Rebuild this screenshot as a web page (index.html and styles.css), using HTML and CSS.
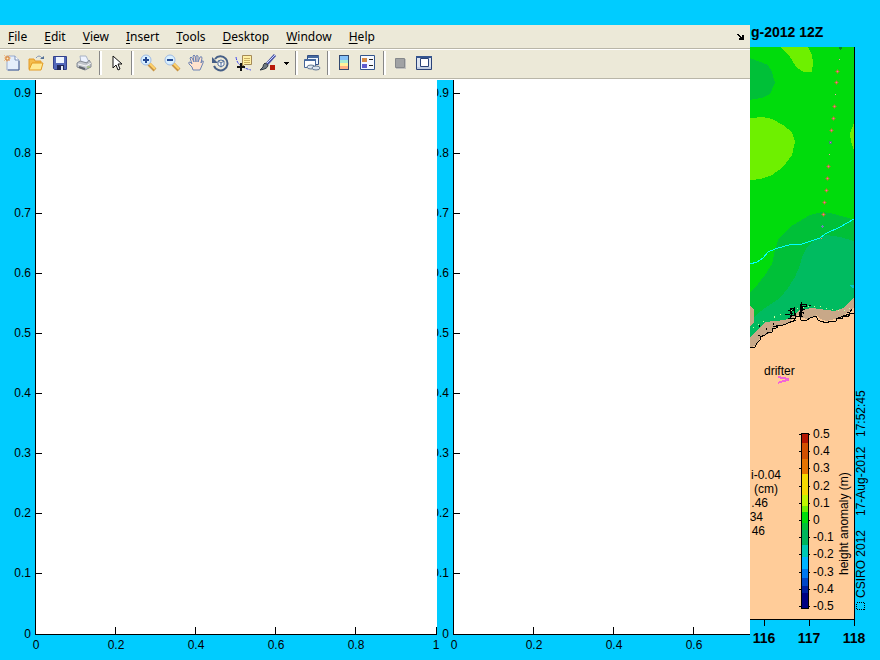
FILE: index.html
```html
<!DOCTYPE html>
<html lang="en">
<head>
<meta charset="utf-8">
<title>Figure</title>
<link rel="stylesheet" href="styles.css">
</head>
<body>
<main class="figure">
  <section class="window">
    <nav class="menubar" aria-label="Menu">
      <button class="menu"><u>F</u>ile</button>
      <button class="menu"><u>E</u>dit</button>
      <button class="menu"><u>V</u>iew</button>
      <button class="menu"><u>I</u>nsert</button>
      <button class="menu"><u>T</u>ools</button>
      <button class="menu"><u>D</u>esktop</button>
      <button class="menu"><u>W</u>indow</button>
      <button class="menu"><u>H</u>elp</button>
      <button class="dock" aria-label="Dock figure"><svg width="8" height="8" viewBox="0 0 8 8"><path d="M0 1h2v1h1v1h1v1h1V2h2v5H2V5h1V4H2V3H1V2H0z"/></svg></button>
    </nav>
    <div class="toolbar" role="toolbar" aria-label="Figure tools">
      <button class="tool" aria-label="New figure"><svg width="18" height="18" viewBox="0 0 18 18"><path d="M4 2h8l4 4v10H4z" fill="#e4eefb" stroke="#9aabcf"/><path d="M5 16h11V7" fill="none" stroke="#4c6496"/><path d="M12 2v4h4" fill="#fff" stroke="#7d91b8"/><path d="M4 1v7M1 4h7M1 1l6 6M7 1L1 7" stroke="#eebd88"/><path d="M3 3h3v3H3z" fill="#fff2c0" stroke="#d3752c"/></svg></button>
      <button class="tool" aria-label="Open"><svg width="18" height="18" viewBox="0 0 18 18"><path d="M2 15V5h5l1 2h6v8z" fill="#f5bd4c" stroke="#e29a2b"/><path d="M2 16l3-7h11l-2 7z" fill="#ffe993" stroke="#e39b22"/><path d="M9 4q3-4 6 0" fill="none" stroke="#8296b8"/><path d="M13 5h4V2z" fill="#536f96"/></svg></button>
      <button class="tool" aria-label="Save"><svg width="18" height="18" viewBox="0 0 18 18"><path d="M2.500 2.500h13v13h-12l-1-1z" fill="#5267b9" stroke="#34428c"/><path d="M5 3h8v6H5z" fill="#edf4ff"/><path d="M6 11h7v5H6z" fill="#202858"/><path d="M10 12h2v4h-2z" fill="#e8edf9"/></svg></button>
      <button class="tool" aria-label="Print"><svg width="18" height="18" viewBox="0 0 18 18"><path d="M6 9L5 2h6l3 6z" fill="#edf3ff" stroke="#a9b2c4"/><path d="M2 9l3-2 7 2 2-3 2 3v4l-6 3-8-3z" fill="#c2c6cc" stroke="#868c95"/><path d="M3 10l8 2 5-3" fill="none" stroke="#f7f7f7"/><path d="M4 13l6 2" stroke="#60656d" stroke-width="2"/><path d="M12 13h3" stroke="#95bd54"/></svg></button>
      <span class="sep"></span>
      <button class="tool" aria-label="Edit plot"><svg width="18" height="18" viewBox="0 0 18 18"><path d="M6 2v12l3-3 2 5 2-1-2-5h4z" fill="#fff" stroke="#111"/></svg></button>
      <span class="sep"></span>
      <button class="tool" aria-label="Zoom in"><svg width="18" height="18" viewBox="0 0 18 18"><path d="M10 10l6 6" stroke="#c99443" stroke-width="4"/><path d="M10 9l6 6" stroke="#ffd36b" stroke-width="2"/><circle cx="7" cy="6" r="5" fill="#d9f0ff" stroke="#9fbbe4"/><path d="M4 6h6M7 3v6" stroke="#234892" stroke-width="2"/></svg></button>
      <button class="tool" aria-label="Zoom out"><svg width="18" height="18" viewBox="0 0 18 18"><path d="M10 10l6 6" stroke="#c99443" stroke-width="4"/><path d="M10 9l6 6" stroke="#ffd36b" stroke-width="2"/><circle cx="7" cy="6" r="5" fill="#d9f0ff" stroke="#9fbbe4"/><path d="M4 6h6" stroke="#234892" stroke-width="2"/></svg></button>
      <button class="tool" aria-label="Pan"><svg width="18" height="18" viewBox="0 0 18 18"><path d="M6 16l-1-3-3-3q-1-2 1-2l2 2-2-6q1-2 2 0l2 4-1-6q1-2 2 0l1 6V2q1-1 2 0v6l2-5q2-1 2 1l-1 5 1-2q2-1 1 2l-3 7z" fill="#ffe2cd" stroke="#6d84b4"/></svg></button>
      <button class="tool" aria-label="Rotate 3D"><svg width="18" height="18" viewBox="0 0 18 18"><path d="M4 5a7 7 0 1 1-1 7" fill="none" stroke="#465f86" stroke-width="2"/><path d="M1 3v6h6z" fill="#465f86"/><path d="M7 7l3-1 3 1v4l-3 2-3-2zM7 7l3 2 3-2M10 9v4" fill="#fff" stroke="#506f9c"/></svg></button>
      <button class="tool" aria-label="Data cursor"><svg width="18" height="18" viewBox="0 0 18 18"><path d="M7.500 1.500h9v9h-7l-2 2z" fill="#fff0a4" stroke="#a58a57"/><path d="M9 4.500h6M9 6.500h6M9 8.500h6" stroke="#c9ae62"/><path d="M1 3q1 6 4 8t5 3 6 2" fill="none" stroke="#3a43ef" stroke-dasharray="3 1"/><path d="M6 9v8M2 13h8" stroke="#111" stroke-width="2"/></svg></button>
      <button class="tool" aria-label="Brush"><svg width="18" height="18" viewBox="0 0 18 18"><path d="M8 10l8-9" stroke="#4b55a6" stroke-width="3"/><path d="M8 9l8-8" stroke="#cbd8ff"/><path d="M6 9l3 2q0 4-8 5l3-3q0-3 2-4" fill="#6c7882" stroke="#303840"/><path d="M11 11h5v5h-5z" fill="#b81808"/></svg></button>
      <button class="caret" aria-label="Brush options"><svg width="5" height="3" viewBox="0 0 5 3"><path d="M0 0h5v1H4v1H3v1H2V2H1V1H0z"/></svg></button>
      <span class="sep"></span>
      <button class="tool" aria-label="Link plot"><svg width="18" height="18" viewBox="0 0 18 18"><path d="M4.500 1.500h11v9h-11z" fill="#edf6ff" stroke="#344f83"/><path d="M1.500 5.500h11v8h-11z" fill="#fff" stroke="#46669a"/><path d="M5 3h11M2 6h11" stroke="#466a9f" stroke-width="2"/><ellipse cx="8" cy="13" rx="4" ry="2" fill="#dce5ef" stroke="#667b94"/><ellipse cx="13" cy="14" rx="4" ry="2" fill="#dce5ef" stroke="#667b94"/></svg></button>
      <span class="sep"></span>
      <button class="tool" aria-label="Insert colorbar"><svg width="18" height="18" viewBox="0 0 18 18"><path d="M5 2h8v4H5z" fill="#85c1f8"/><path d="M5 6h8v3H5z" fill="#a7ecd4"/><path d="M5 9h8v3H5z" fill="#fff19a"/><path d="M5 12h8v4H5z" fill="#ffb083"/><rect x="4.500" y="1.500" width="9" height="14" fill="none" stroke="#33496f"/></svg></button>
      <button class="tool" aria-label="Insert legend"><svg width="18" height="18" viewBox="0 0 18 18"><path d="M1.500 1.500h14v14h-14z" fill="#f6f9ff" stroke="#33558d"/><path d="M3 4h5v4H3z" fill="#d58b46"/><path d="M3 10h5v4H3z" fill="#605dce"/><path d="M10 5.500h4M10 11.500h4" stroke="#222"/></svg></button>
      <span class="sep"></span>
      <button class="tool" aria-label="Hide plot tools"><svg width="18" height="18" viewBox="0 0 18 18"><path d="M5 5h10v10H5z" fill="#c1c1bf"/><path d="M4.500 4.500h9v9h-9z" fill="#a0a2a4" stroke="#85888b"/></svg></button>
      <button class="tool" aria-label="Show plot tools"><svg width="18" height="18" viewBox="0 0 18 18"><path d="M1.500 2.500h15v13h-15z" fill="#dce4f0" stroke="#2a4379"/><path d="M1 3h16" stroke="#35558f" stroke-width="2"/><path d="M2 14h14" stroke="#a5b4d0"/><path d="M5.500 4.500h8v8h-8z" fill="#fff" stroke="#2a4379"/></svg></button>
    </div>
    <div class="plots">
      <svg class="plot first" viewBox="0 80 437 580" role="img" aria-label="Left axes">
        <path class="paper" d="M36 80h401v554H36z"/>
        <path class="axis" d="M35.500 80v554.500H437M36 93.500h6M36 153.500h6M36 213.500h6M36 273.500h6M36 333.500h6M36 393.500h6M36 453.500h6M36 513.500h6M36 573.500h6M115.500 627v7M195.500 627v7M275.500 627v7M355.500 627v7M436.500 627v7"/>
        <g class="end"><text x="31" y="97">0.9</text><text x="31" y="157">0.8</text><text x="31" y="217">0.7</text><text x="31" y="277">0.6</text><text x="31" y="337">0.5</text><text x="31" y="397">0.4</text><text x="31" y="457">0.3</text><text x="31" y="517">0.2</text><text x="31" y="577">0.1</text><text x="31" y="638">0</text></g>
        <g class="mid"><text x="36" y="649">0</text><text x="116" y="649">0.2</text><text x="196" y="649">0.4</text><text x="276" y="649">0.6</text><text x="356" y="649">0.8</text><text x="436" y="649">1</text></g>
      </svg>
      <svg class="plot second" viewBox="437 80 313 580" role="img" aria-label="Right axes">
        <path class="paper" d="M454 80h296v554H454z"/>
        <path class="axis" d="M453.500 80v554.500H750M454 93.500h6M454 153.500h6M454 213.500h6M454 273.500h6M454 333.500h6M454 393.500h6M454 453.500h6M454 513.500h6M454 573.500h6M533.500 627v7M613.500 627v7M693.500 627v7"/>
        <g class="end"><text x="449" y="97">0.9</text><text x="449" y="157">0.8</text><text x="449" y="217">0.7</text><text x="449" y="277">0.6</text><text x="449" y="337">0.5</text><text x="449" y="397">0.4</text><text x="449" y="457">0.3</text><text x="449" y="517">0.2</text><text x="449" y="577">0.1</text><text x="449" y="638">0</text></g>
        <g class="mid"><text x="454" y="649">0</text><text x="534" y="649">0.2</text><text x="614" y="649">0.4</text><text x="694" y="649">0.6</text></g>
      </svg>
    </div>
  </section>
  <svg class="map" viewBox="750 0 130 660" role="img" aria-label="Sea height anomaly map">
    <defs><g id="fix"><path d="M0 -2h1v1h1v1h1v1h-1v1h-1v1h-1v-1h-1v-1h-1v-1h1v-1h1z" fill="#64a818"/><path d="M0 -1h1v1h1v1h-1v1h-1v-1h-1v-1h1z" fill="#b48c3c"/><path d="M0 0h1v1h-1z" fill="#ff50d0"/></g></defs>
    <g shape-rendering="crispEdges">
      <path fill="#00dc0c" d="M750 47h104v300H750z"/>
      <path fill="#6ef000" d="M781 47h27l4 8 1 7-1 10h-8l-7-4-7-11zM750 118l13-1 9 2 11 6 9 7 3 10-3 13-9 12-11 8-11 4-11 1zM854 123l-4 10 1 9 3 8z"/>
      <path fill="#00c038" d="M750 58l5 2 13 5 4 7 3 11-5 11-8 4-8 1-4 1zM854 220l-9-3-15-4-8-1-12 3-17 10-14 13-4 12-3 14-7 11-7 9-8 9v50h104z"/>
      <path fill="#00bb60" d="M854 241l-14-4-13-2-12 5-8 7-5 10-2 8-5 12-7 11-8 10-15 10-8 6-7 7v26h104z"/>
      <path fill="#00c8c8" d="M849 285h5v3h-2z"/>
      <path fill="#c8a888" d="M750 305l4 5v12l-4 5zM750 337l15-15 20-2 8-4 7-6 12-2 23 3 8-3 11-10v30l-104 30z"/>
      <path fill="#fc9" d="M750 348l7-3 3-7 10-5 5-6 12-3 6-6 5-3 4 3 6 1 9-4 3 4 7 2 13-3 7-5 7-5v311H750z"/>
      <path fill="none" stroke="#000" d="M750 348l5-1 2-4 3-3v-3l5-2 4-3h3l1-4h3l1-3 4 1 7-3 5-2 4-5 3 1v-5l3-2M803 316l-3 1 1 3 5 1 4-3 6-2 2 4 2 1h3v2l6-1 7-1 1-3 5 1 1-3 5 1 2-3 4-1v-3M791 322l3-1M773 326h3M828 321h6M836 319l5-2M844 316l5-2"/>
      <path fill="none" stroke="#000" d="M785 315l5-1 3-1h-3v-5h3v2h-5M791 309v8M794 307v8h-4v3h5v-5M788 318h4M793 320h3M801 302v14M802 304h4v2h-4v3h3M800 304v8h3v2M799 316v-4h4M806 305v2M809 305h2M759 325v2M766 328v2M773 323v2M758 335h2M777 325v3M841 317l4-2M847 312l3 1M849 314l3-5"/>
      <path fill="none" stroke="#c8ffa0" stroke-width="1" stroke-dasharray="1 5" d="M753 328l13-8 20-7 12-5 15-2 10 1 10 3 10 1 10-4 3-3"/>
      <path fill="none" stroke="#0ff" d="M750 264l7-2 6-4 5-6 7-3 17-5h10l18-6 5-4 15-7 14-8"/>
      <path d="M839 47h3v2h-1v1h-1v-1h-1z" fill="#078c24"/>
      <path d="M839 59h1v1h-1zM835 94h1v1h-1zM829 154h1v1h-1z" fill="#f5a0a0"/><use href="#fix" x="837" y="71"/><use href="#fix" x="836" y="82"/><use href="#fix" x="834" y="106"/><use href="#fix" x="833" y="118"/><use href="#fix" x="831" y="130"/><path d="M829 141h3v3h-3z" fill="#3c8c70"/><path d="M830 142h1v1h-1z" fill="#ff50d0"/><use href="#fix" x="828" y="166"/><use href="#fix" x="827" y="178"/><use href="#fix" x="826" y="190"/><use href="#fix" x="824" y="202"/><use href="#fix" x="823" y="214"/><path d="M821 226h3v1h-3zM822 225h1v3h-1z" fill="#6688b4"/><path d="M821 238h1v1h-1z" fill="#f86"/>
      <path fill="none" stroke="#f364d8" stroke-width="2" d="M778 377l5 1 5 1v1l-5 1-5 2"/>
      <path class="axis" d="M854.500 47v579M750 619.500h105M764.500 620v6M809.500 620v6"/>
      <path fill="#b41400" d="M801 433h8v10h-8z"/><path fill="#d25000" d="M801 443h8v16h-8z"/><path fill="#e67300" d="M801 459h8v15h-8z"/><path fill="#f5d800" d="M801 474h8v21h-8z"/><path fill="#bef500" d="M801 495h8v11h-8z"/><path fill="#6ef000" d="M801 506h8v6h-8z"/><path fill="#00dc0c" d="M801 512h8v11h-8z"/><path fill="#00c038" d="M801 523h8v7h-8z"/><path fill="#00b45c" d="M801 530h8v15h-8z"/><path fill="#00c8b4" d="M801 545h8v12h-8z"/><path fill="#00b4ff" d="M801 557h8v12h-8z"/><path fill="#0078f0" d="M801 569h8v9h-8z"/><path fill="#0046c8" d="M801 578h8v8h-8z"/><path fill="#001ea0" d="M801 586h8v7h-8z"/><path fill="#000082" d="M801 593h8v15h-8z"/>
      <path class="axis" d="M801.500 433.500h7v175h-7zM799 434.500h3M799 451.500h3M799 468.500h3M799 486.500h3M799 503.500h3M799 520.500h3M799 537.500h3M799 554.500h3M799 572.500h3M799 589.500h3M799 606.500h3M808 434.500h2M808 451.500h2M808 468.500h2M808 486.500h2M808 503.500h2M808 520.500h2M808 537.500h2M808 554.500h2M808 572.500h2M808 589.500h2M808 606.500h2"/>
      <path fill="none" stroke="#000" stroke-dasharray="1 1" d="M856.500 602.500h8v7h-8z"/>
    </g>
    <text class="bold" x="751" y="37">g-2012 12Z</text>
    <text x="764" y="375">drifter</text>
    <g class="end"><text x="781" y="479">i-0.04</text><text x="778" y="493">(cm)</text><text x="768" y="507">.46</text><text x="763" y="521">34</text><text x="765" y="535">46</text></g>
    <g><text x="813" y="438">0.5</text><text x="813" y="455">0.4</text><text x="813" y="472">0.3</text><text x="813" y="490">0.2</text><text x="813" y="507">0.1</text><text x="813" y="524">0</text><text x="813" y="541">-0.1</text><text x="813" y="558">-0.2</text><text x="813" y="576">-0.3</text><text x="813" y="593">-0.4</text><text x="813" y="610">-0.5</text></g>
    <text transform="translate(848 575) rotate(-90)">height anomaly (m)</text>
    <text transform="translate(865 598) rotate(-90)">CSIRO 2012</text>
    <text transform="translate(865 516) rotate(-90)">17-Aug-2012</text>
    <text transform="translate(865 437) rotate(-90)">17:52:45</text>
    <g class="mid bold"><text x="764" y="643">116</text><text x="809" y="643">117</text><text x="854" y="643">118</text></g>
  </svg>
</main>
</body>
</html>
```
FILE: styles.css
```css
* { box-sizing: border-box; }
body {
  margin: 0;
  background: #00ccff;
  font-family: "Liberation Sans", Arial, sans-serif;
  font-size: 12px;
}
.figure {
  display: grid;
  grid-template-columns: 750fr 130fr;
  align-items: start;
}
.window { padding-top: 25px; min-width: 0; }
button {
  margin: 0;
  padding: 0;
  border: 0;
  background: none;
  color: #000;
  font: inherit;
}
.menubar {
  display: flex;
  align-items: center;
  gap: 17px;
  height: 24px;
  padding: 0 5px 0 8px;
  background: #ece9d8;
  border-bottom: 1px solid #b9b6a8;
  font-family: "Noto Sans", sans-serif;
}
.menu u { text-underline-offset: 2px; }
.dock { display: flex; margin-left: auto; }
.toolbar {
  display: flex;
  align-items: center;
  height: 30px;
  padding-bottom: 2px;
  background: #ece9d8;
  border-top: 1px solid #fff;
  border-bottom: 1px solid #b9b6a8;
}
.tool {
  display: flex;
  align-items: center;
  justify-content: center;
  width: 24px;
  height: 24px;
}
.caret {
  display: flex;
  align-items: center;
  justify-content: center;
  width: 12px;
  height: 24px;
}
.sep {
  width: 3px;
  height: 24px;
  margin: 0 2px 0 3px;
  background: #888;
  border-right: 2px solid #fff;
}
.plots {
  display: grid;
  grid-template-columns: 437fr 313fr;
  border-top: 1px solid #fff;
}
.plot, .map { display: block; width: 100%; height: auto; }
.first { overflow: visible; }
.paper { fill: #fff; }
.axis { fill: none; stroke: #000; shape-rendering: crispEdges; }
.end { text-anchor: end; }
.mid { text-anchor: middle; }
.bold { font-size: 14px; font-weight: bold; }
```
